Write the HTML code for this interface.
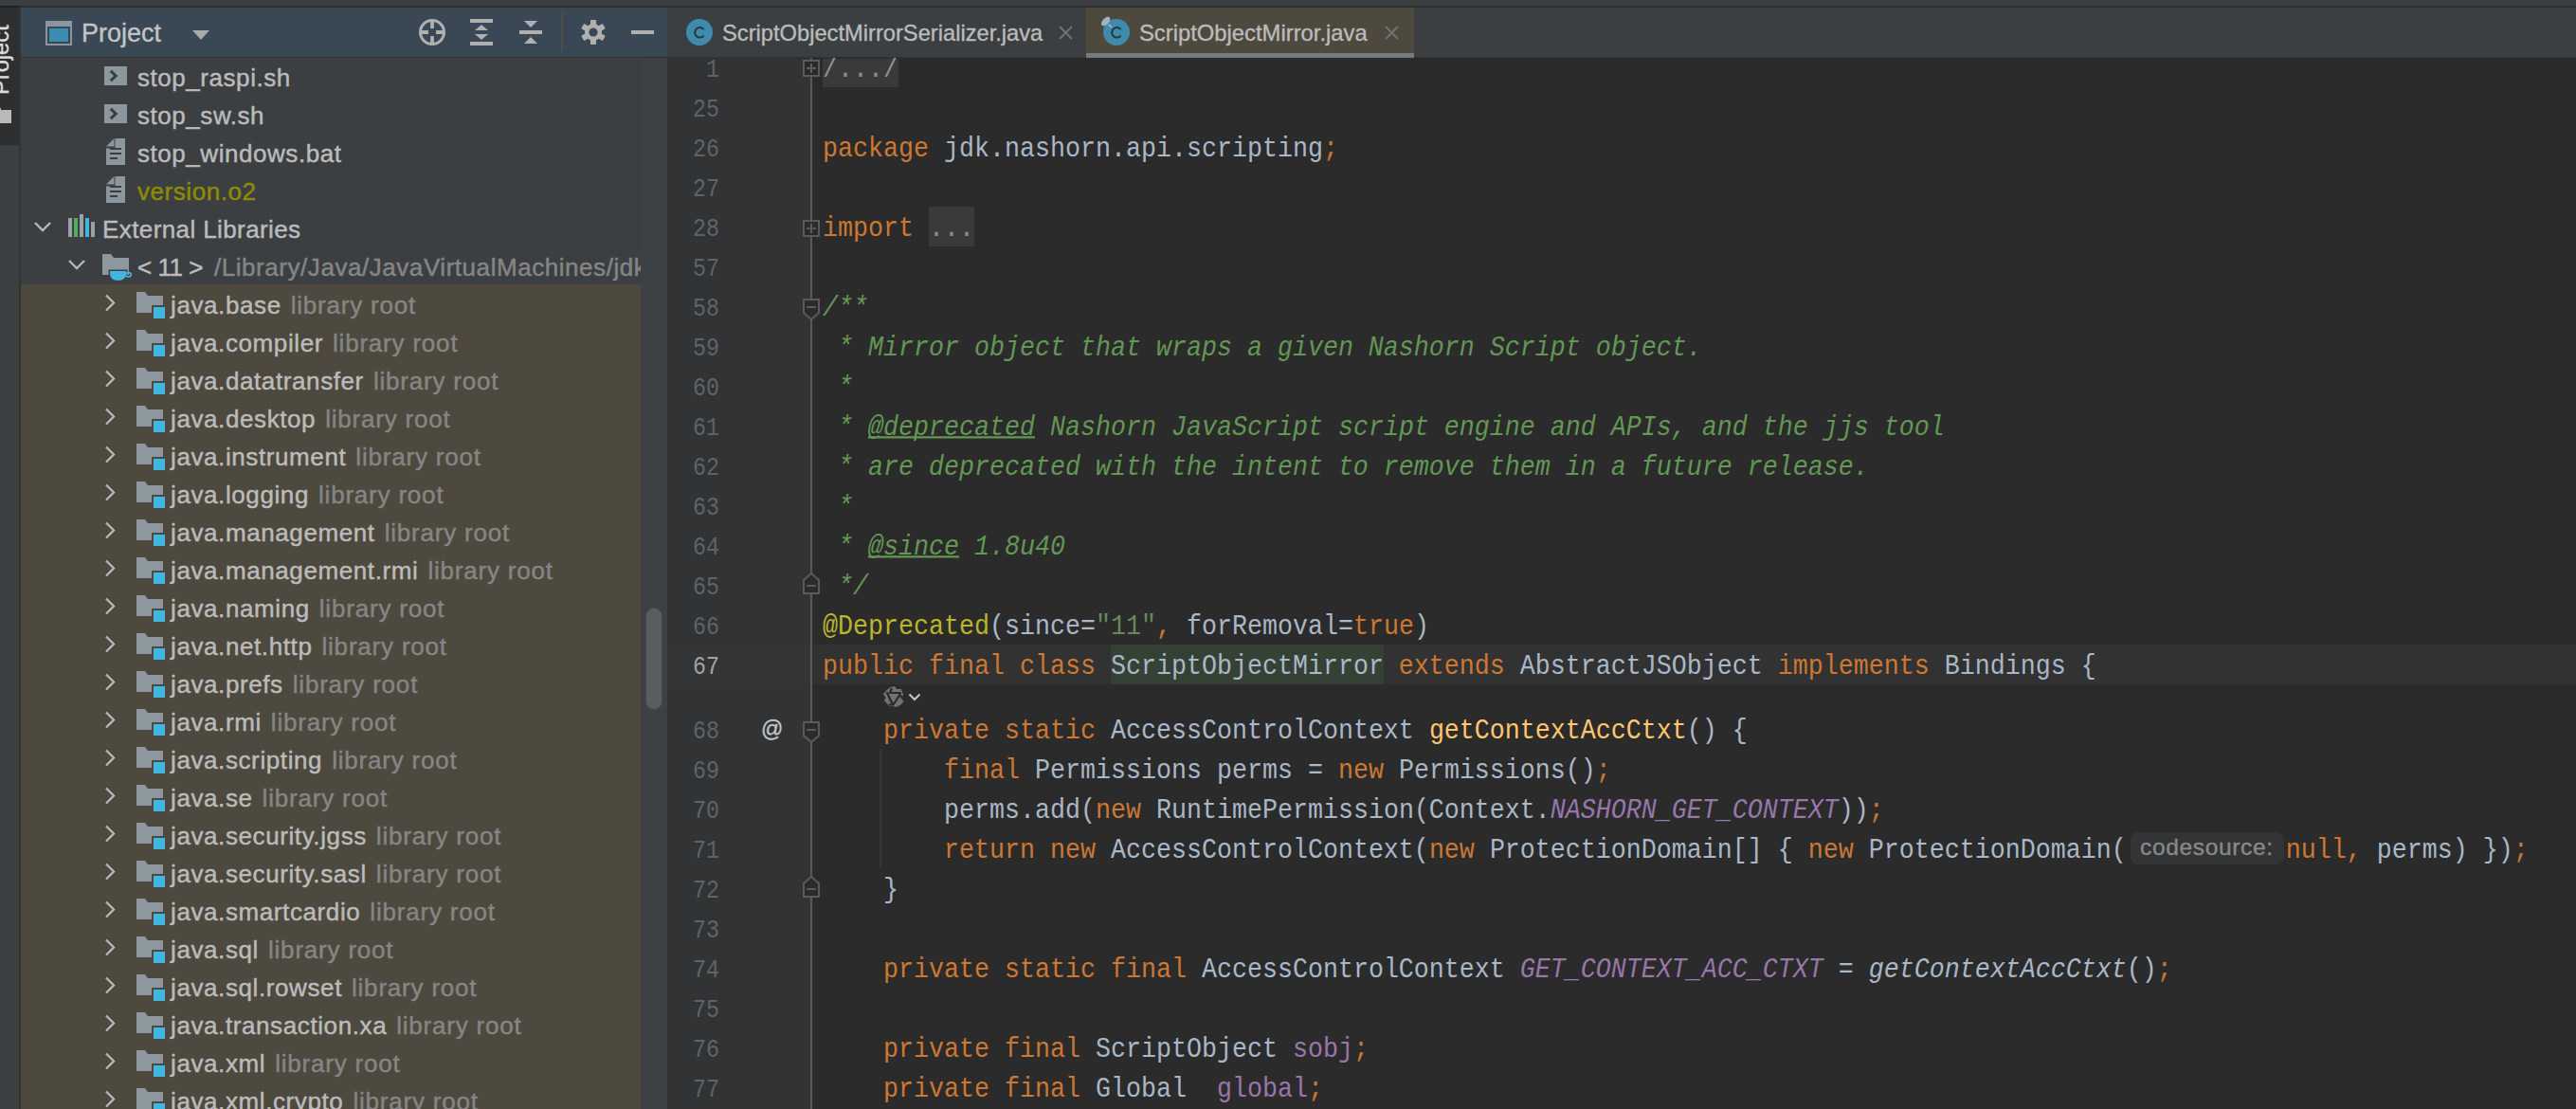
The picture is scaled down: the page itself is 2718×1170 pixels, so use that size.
<!DOCTYPE html><html><head><meta charset="utf-8"><style>
*{margin:0;padding:0;box-sizing:border-box}
html,body{width:2718px;height:1170px;overflow:hidden;background:#3c3f41}
body{position:relative;font-family:"Liberation Sans",sans-serif}
.abs{position:absolute}
.ui{font-family:"Liberation Sans",sans-serif;white-space:pre;-webkit-text-stroke:0.35px currentColor}
.row{position:absolute;left:0;height:40px;font-size:26px;line-height:40px;letter-spacing:0.55px;color:#bbbbbb;white-space:pre;-webkit-text-stroke:0.45px currentColor}
.cl{position:absolute;left:868px;height:42px;transform:scaleY(1.12);transform-origin:0 27px;font-family:"Liberation Mono",monospace;font-size:26.67px;line-height:42px;color:#a9b7c6;white-space:pre}
.ln{position:absolute;left:704px;width:55px;transform:scaleY(1.2);transform-origin:0 26px;text-align:right;height:42px;font-family:"Liberation Mono",monospace;font-size:23.3px;line-height:42px;color:#606366;white-space:pre}
.k{color:#cc7832}.c{color:#629755;font-style:italic}.an{color:#bbb529}.s{color:#6a8759}.m{color:#ffc66d}.f{color:#9876aa}.fi{color:#9876aa;font-style:italic}.i{font-style:italic}
.u{text-decoration:underline;text-underline-offset:1px;text-decoration-thickness:2px;text-decoration-skip-ink:none}
</style></head><body>
<div class="abs" style="left:0;top:0;width:2718px;height:6px;background:#3c3f41"></div>
<div class="abs" style="left:0;top:6px;width:2718px;height:2px;background:#2f2f2f"></div>
<div class="abs" style="left:0;top:6px;width:20px;height:2px;background:#222222"></div>
<div class="abs" style="left:0;top:8px;width:20px;height:1162px;background:#3c3f41"></div>
<div class="abs" style="left:0;top:8px;width:20px;height:145px;background:#2d2f30;overflow:hidden"><div class="ui" style="position:absolute;left:-13.4px;top:91.5px;transform:rotate(-90deg);transform-origin:0 0;font-size:23.7px;line-height:28px;color:#dcdcdc">Project</div><div class="abs" style="left:0;top:108px;width:12px;height:14px;background:#b9babb"></div><div class="abs" style="left:0;top:105.7px;width:1.4px;height:3px;background:#b9babb"></div></div>
<div class="abs" style="left:20px;top:8px;width:2px;height:1162px;background:#323334"></div>
<div class="abs" style="left:22px;top:8px;width:682px;height:52px;background:#3a4755"></div>
<div class="abs" style="left:22px;top:60px;width:682px;height:1px;background:#2f3134"></div>
<div class="abs" style="left:48px;top:22px;width:28px;height:26px;background:#8b97a0"></div>
<div class="abs" style="left:50px;top:28px;width:24px;height:18px;background:#3a4755"></div>
<div class="abs" style="left:52px;top:30px;width:20px;height:14px;background:#3d8db0"></div>
<div class="ui abs" style="left:86px;top:15px;font-size:27px;line-height:40px;color:#c4c4c4">Project</div>
<svg class="abs" style="left:203px;top:32px" width="18" height="10"><path d="M0 0H18L9 10Z" fill="#aaaaaa"/></svg>
<svg class="abs" style="left:440px;top:18px" width="32" height="32" viewBox="0 0 32 32"><circle cx="16" cy="16" r="12.5" fill="none" stroke="#b0b0b0" stroke-width="3"/><path d="M16 3.5V12M16 20V28.5M3.5 16H12M20 16H28.5" stroke="#b0b0b0" stroke-width="3.8"/></svg>
<svg class="abs" style="left:496px;top:20px" width="24" height="28" viewBox="0 0 24 28"><rect x="0" y="0" width="24" height="4" fill="#b0b0b0"/><rect x="0" y="24" width="24" height="4" fill="#b0b0b0"/><path d="M5 12L12 6L19 12Z M5 16L12 22L19 16Z" fill="#b0b0b0"/></svg>
<svg class="abs" style="left:548px;top:22px" width="24" height="24" viewBox="0 0 24 24"><path d="M5 0H19L12 7Z" fill="#b0b0b0"/><rect x="0" y="10" width="24" height="4" fill="#b0b0b0"/><path d="M5 24H19L12 17Z" fill="#b0b0b0"/></svg>
<div class="abs" style="left:592px;top:14px;width:2px;height:40px;background:#514d49"></div>
<svg class="abs" style="left:613px;top:21px" width="26" height="26" viewBox="0 0 26 26"><g fill="#b0b0b0"><rect x="10" y="0" width="6" height="6" rx="0.8" transform="rotate(0 13 13)"/><rect x="10" y="0" width="6" height="6" rx="0.8" transform="rotate(60 13 13)"/><rect x="10" y="0" width="6" height="6" rx="0.8" transform="rotate(120 13 13)"/><rect x="10" y="0" width="6" height="6" rx="0.8" transform="rotate(180 13 13)"/><rect x="10" y="0" width="6" height="6" rx="0.8" transform="rotate(240 13 13)"/><rect x="10" y="0" width="6" height="6" rx="0.8" transform="rotate(300 13 13)"/><circle cx="13" cy="13" r="9"/></g><circle cx="13" cy="13" r="4.6" fill="#3a4755"/></svg>
<div class="abs" style="left:666px;top:32px;width:24px;height:4px;background:#b0b0b0"></div>
<div class="abs" style="left:22px;top:61px;width:654px;height:1109px;background:#3c3f41"></div>
<div class="abs" style="left:22px;top:300px;width:654px;height:870px;background:#4d493e"></div>
<div class="abs" style="left:676px;top:61px;width:28px;height:1109px;background:#3e4144"></div>
<div class="abs" style="left:681px;top:641px;width:18px;height:108px;border-radius:9px;background:#5c5d5f;border:1px solid #474849"></div>
<div class="abs" style="left:22px;top:61px;width:654px;height:1109px;overflow:hidden">
<div class="row" style="top:-1px;left:0;width:654px"><svg style="position:absolute;left:88px;top:10px" width="24" height="20" viewBox="0 0 24 20"><rect x="0" y="0" width="24" height="20" fill="#8d979e"/><path d="M6.8 4.8L12.2 10L6.8 15.2" fill="none" stroke="#3c3f41" stroke-width="3"/></svg><span style="position:absolute;left:123px;top:1.5px;">stop_raspi.sh</span></div>
<div class="row" style="top:39px;left:0;width:654px"><svg style="position:absolute;left:88px;top:10px" width="24" height="20" viewBox="0 0 24 20"><rect x="0" y="0" width="24" height="20" fill="#8d979e"/><path d="M6.8 4.8L12.2 10L6.8 15.2" fill="none" stroke="#3c3f41" stroke-width="3"/></svg><span style="position:absolute;left:123px;top:1.5px;">stop_sw.sh</span></div>
<div class="row" style="top:79px;left:0;width:654px"><svg style="position:absolute;left:90px;top:6px" width="20" height="28" viewBox="0 0 20 28"><path d="M9.5 0H20V28H0V10.5H9.5Z" fill="#8d979e"/><path d="M0 8.5L8.5 0V8.5Z" fill="#8d979e"/><rect x="4" y="10" width="12" height="2" fill="#3c3f41"/><rect x="4" y="15" width="12" height="2" fill="#3c3f41"/><rect x="4" y="20" width="8" height="2" fill="#3c3f41"/></svg><span style="position:absolute;left:123px;top:1.5px;">stop_windows.bat</span></div>
<div class="row" style="top:119px;left:0;width:654px"><svg style="position:absolute;left:90px;top:6px" width="20" height="28" viewBox="0 0 20 28"><path d="M9.5 0H20V28H0V10.5H9.5Z" fill="#8d979e"/><path d="M0 8.5L8.5 0V8.5Z" fill="#8d979e"/><rect x="4" y="10" width="12" height="2" fill="#3c3f41"/><rect x="4" y="15" width="12" height="2" fill="#3c3f41"/><rect x="4" y="20" width="8" height="2" fill="#3c3f41"/></svg><span style="position:absolute;left:123px;top:1.5px;color:#8c8c00">version.o2</span></div>
<div class="row" style="top:159px;left:0;width:654px"><svg style="position:absolute;left:14px;top:13px" width="18" height="12" viewBox="0 0 18 12"><path d="M1 2L9 10L17 2" fill="none" stroke="#b4b6b8" stroke-width="2.4"/></svg><svg style="position:absolute;left:50px;top:6px" width="28" height="24" viewBox="0 0 28 24"><rect x="0" y="4" width="4" height="20" fill="#9aa1a6"/><rect x="6" y="4" width="4" height="20" fill="#59a869"/><rect x="12" y="0" width="4" height="24" fill="#9aa1a6"/><rect x="18" y="4" width="4" height="20" fill="#40b6e0"/><rect x="24" y="8" width="4" height="16" fill="#9aa1a6"/></svg><span style="position:absolute;left:86px;top:1.5px;letter-spacing:0.4px">External Libraries</span></div>
<div class="row" style="top:199px;left:0;width:654px"><svg style="position:absolute;left:50px;top:13px" width="18" height="12" viewBox="0 0 18 12"><path d="M1 2L9 10L17 2" fill="none" stroke="#b4b6b8" stroke-width="2.4"/></svg><svg style="position:absolute;left:86px;top:8px" width="32" height="30" viewBox="0 0 32 30"><path d="M0 0H9L12 4H28V22H0Z" fill="#8d979e"/><path d="M6.5 16.5H26.5V19.5Q26.5 29.5 16.5 29.5Q6.5 29.5 6.5 19.5Z" fill="#3c3f41"/><path d="M8 18H25V20Q25 28 16.5 28Q8 28 8 20Z" fill="#40b6e0"/><ellipse cx="27.3" cy="21.8" rx="3" ry="2.2" fill="none" stroke="#40b6e0" stroke-width="1.7"/></svg><span style="position:absolute;left:123px;top:1.5px;letter-spacing:-0.45px">&lt; 11 &gt;</span><span style="position:absolute;left:204px;top:1.5px;color:#858585">/Library/Java/JavaVirtualMachines/jdk-11.0.2.jdk/Contents/Home</span></div>
<div class="row" style="top:239px;left:0;width:654px"><svg style="position:absolute;left:88px;top:10px" width="13" height="19" viewBox="0 0 13 19"><path d="M2 1.5L10 9.5L2 17.5" fill="none" stroke="#b4b6b8" stroke-width="2.4"/></svg><svg style="position:absolute;left:122px;top:8px" width="32" height="30" viewBox="0 0 32 30"><path d="M0 0H9L12 4H28V22H0Z" fill="#8d979e"/><rect x="16" y="14" width="16" height="16" fill="#4d493e"/><rect x="18" y="16" width="12" height="12" fill="#40b6e0"/></svg><span style="position:absolute;left:158px;top:1.5px;letter-spacing:0.6px">java.base<span style="color:#858585;margin-left:10px;letter-spacing:0.8px">library root</span></span></div>
<div class="row" style="top:279px;left:0;width:654px"><svg style="position:absolute;left:88px;top:10px" width="13" height="19" viewBox="0 0 13 19"><path d="M2 1.5L10 9.5L2 17.5" fill="none" stroke="#b4b6b8" stroke-width="2.4"/></svg><svg style="position:absolute;left:122px;top:8px" width="32" height="30" viewBox="0 0 32 30"><path d="M0 0H9L12 4H28V22H0Z" fill="#8d979e"/><rect x="16" y="14" width="16" height="16" fill="#4d493e"/><rect x="18" y="16" width="12" height="12" fill="#40b6e0"/></svg><span style="position:absolute;left:158px;top:1.5px;letter-spacing:0.6px">java.compiler<span style="color:#858585;margin-left:10px;letter-spacing:0.8px">library root</span></span></div>
<div class="row" style="top:319px;left:0;width:654px"><svg style="position:absolute;left:88px;top:10px" width="13" height="19" viewBox="0 0 13 19"><path d="M2 1.5L10 9.5L2 17.5" fill="none" stroke="#b4b6b8" stroke-width="2.4"/></svg><svg style="position:absolute;left:122px;top:8px" width="32" height="30" viewBox="0 0 32 30"><path d="M0 0H9L12 4H28V22H0Z" fill="#8d979e"/><rect x="16" y="14" width="16" height="16" fill="#4d493e"/><rect x="18" y="16" width="12" height="12" fill="#40b6e0"/></svg><span style="position:absolute;left:158px;top:1.5px;letter-spacing:0.6px">java.datatransfer<span style="color:#858585;margin-left:10px;letter-spacing:0.8px">library root</span></span></div>
<div class="row" style="top:359px;left:0;width:654px"><svg style="position:absolute;left:88px;top:10px" width="13" height="19" viewBox="0 0 13 19"><path d="M2 1.5L10 9.5L2 17.5" fill="none" stroke="#b4b6b8" stroke-width="2.4"/></svg><svg style="position:absolute;left:122px;top:8px" width="32" height="30" viewBox="0 0 32 30"><path d="M0 0H9L12 4H28V22H0Z" fill="#8d979e"/><rect x="16" y="14" width="16" height="16" fill="#4d493e"/><rect x="18" y="16" width="12" height="12" fill="#40b6e0"/></svg><span style="position:absolute;left:158px;top:1.5px;letter-spacing:0.6px">java.desktop<span style="color:#858585;margin-left:10px;letter-spacing:0.8px">library root</span></span></div>
<div class="row" style="top:399px;left:0;width:654px"><svg style="position:absolute;left:88px;top:10px" width="13" height="19" viewBox="0 0 13 19"><path d="M2 1.5L10 9.5L2 17.5" fill="none" stroke="#b4b6b8" stroke-width="2.4"/></svg><svg style="position:absolute;left:122px;top:8px" width="32" height="30" viewBox="0 0 32 30"><path d="M0 0H9L12 4H28V22H0Z" fill="#8d979e"/><rect x="16" y="14" width="16" height="16" fill="#4d493e"/><rect x="18" y="16" width="12" height="12" fill="#40b6e0"/></svg><span style="position:absolute;left:158px;top:1.5px;letter-spacing:0.6px">java.instrument<span style="color:#858585;margin-left:10px;letter-spacing:0.8px">library root</span></span></div>
<div class="row" style="top:439px;left:0;width:654px"><svg style="position:absolute;left:88px;top:10px" width="13" height="19" viewBox="0 0 13 19"><path d="M2 1.5L10 9.5L2 17.5" fill="none" stroke="#b4b6b8" stroke-width="2.4"/></svg><svg style="position:absolute;left:122px;top:8px" width="32" height="30" viewBox="0 0 32 30"><path d="M0 0H9L12 4H28V22H0Z" fill="#8d979e"/><rect x="16" y="14" width="16" height="16" fill="#4d493e"/><rect x="18" y="16" width="12" height="12" fill="#40b6e0"/></svg><span style="position:absolute;left:158px;top:1.5px;letter-spacing:0.6px">java.logging<span style="color:#858585;margin-left:10px;letter-spacing:0.8px">library root</span></span></div>
<div class="row" style="top:479px;left:0;width:654px"><svg style="position:absolute;left:88px;top:10px" width="13" height="19" viewBox="0 0 13 19"><path d="M2 1.5L10 9.5L2 17.5" fill="none" stroke="#b4b6b8" stroke-width="2.4"/></svg><svg style="position:absolute;left:122px;top:8px" width="32" height="30" viewBox="0 0 32 30"><path d="M0 0H9L12 4H28V22H0Z" fill="#8d979e"/><rect x="16" y="14" width="16" height="16" fill="#4d493e"/><rect x="18" y="16" width="12" height="12" fill="#40b6e0"/></svg><span style="position:absolute;left:158px;top:1.5px;letter-spacing:0.6px">java.management<span style="color:#858585;margin-left:10px;letter-spacing:0.8px">library root</span></span></div>
<div class="row" style="top:519px;left:0;width:654px"><svg style="position:absolute;left:88px;top:10px" width="13" height="19" viewBox="0 0 13 19"><path d="M2 1.5L10 9.5L2 17.5" fill="none" stroke="#b4b6b8" stroke-width="2.4"/></svg><svg style="position:absolute;left:122px;top:8px" width="32" height="30" viewBox="0 0 32 30"><path d="M0 0H9L12 4H28V22H0Z" fill="#8d979e"/><rect x="16" y="14" width="16" height="16" fill="#4d493e"/><rect x="18" y="16" width="12" height="12" fill="#40b6e0"/></svg><span style="position:absolute;left:158px;top:1.5px;letter-spacing:0.6px">java.management.rmi<span style="color:#858585;margin-left:10px;letter-spacing:0.8px">library root</span></span></div>
<div class="row" style="top:559px;left:0;width:654px"><svg style="position:absolute;left:88px;top:10px" width="13" height="19" viewBox="0 0 13 19"><path d="M2 1.5L10 9.5L2 17.5" fill="none" stroke="#b4b6b8" stroke-width="2.4"/></svg><svg style="position:absolute;left:122px;top:8px" width="32" height="30" viewBox="0 0 32 30"><path d="M0 0H9L12 4H28V22H0Z" fill="#8d979e"/><rect x="16" y="14" width="16" height="16" fill="#4d493e"/><rect x="18" y="16" width="12" height="12" fill="#40b6e0"/></svg><span style="position:absolute;left:158px;top:1.5px;letter-spacing:0.6px">java.naming<span style="color:#858585;margin-left:10px;letter-spacing:0.8px">library root</span></span></div>
<div class="row" style="top:599px;left:0;width:654px"><svg style="position:absolute;left:88px;top:10px" width="13" height="19" viewBox="0 0 13 19"><path d="M2 1.5L10 9.5L2 17.5" fill="none" stroke="#b4b6b8" stroke-width="2.4"/></svg><svg style="position:absolute;left:122px;top:8px" width="32" height="30" viewBox="0 0 32 30"><path d="M0 0H9L12 4H28V22H0Z" fill="#8d979e"/><rect x="16" y="14" width="16" height="16" fill="#4d493e"/><rect x="18" y="16" width="12" height="12" fill="#40b6e0"/></svg><span style="position:absolute;left:158px;top:1.5px;letter-spacing:0.6px">java.net.http<span style="color:#858585;margin-left:10px;letter-spacing:0.8px">library root</span></span></div>
<div class="row" style="top:639px;left:0;width:654px"><svg style="position:absolute;left:88px;top:10px" width="13" height="19" viewBox="0 0 13 19"><path d="M2 1.5L10 9.5L2 17.5" fill="none" stroke="#b4b6b8" stroke-width="2.4"/></svg><svg style="position:absolute;left:122px;top:8px" width="32" height="30" viewBox="0 0 32 30"><path d="M0 0H9L12 4H28V22H0Z" fill="#8d979e"/><rect x="16" y="14" width="16" height="16" fill="#4d493e"/><rect x="18" y="16" width="12" height="12" fill="#40b6e0"/></svg><span style="position:absolute;left:158px;top:1.5px;letter-spacing:0.6px">java.prefs<span style="color:#858585;margin-left:10px;letter-spacing:0.8px">library root</span></span></div>
<div class="row" style="top:679px;left:0;width:654px"><svg style="position:absolute;left:88px;top:10px" width="13" height="19" viewBox="0 0 13 19"><path d="M2 1.5L10 9.5L2 17.5" fill="none" stroke="#b4b6b8" stroke-width="2.4"/></svg><svg style="position:absolute;left:122px;top:8px" width="32" height="30" viewBox="0 0 32 30"><path d="M0 0H9L12 4H28V22H0Z" fill="#8d979e"/><rect x="16" y="14" width="16" height="16" fill="#4d493e"/><rect x="18" y="16" width="12" height="12" fill="#40b6e0"/></svg><span style="position:absolute;left:158px;top:1.5px;letter-spacing:0.6px">java.rmi<span style="color:#858585;margin-left:10px;letter-spacing:0.8px">library root</span></span></div>
<div class="row" style="top:719px;left:0;width:654px"><svg style="position:absolute;left:88px;top:10px" width="13" height="19" viewBox="0 0 13 19"><path d="M2 1.5L10 9.5L2 17.5" fill="none" stroke="#b4b6b8" stroke-width="2.4"/></svg><svg style="position:absolute;left:122px;top:8px" width="32" height="30" viewBox="0 0 32 30"><path d="M0 0H9L12 4H28V22H0Z" fill="#8d979e"/><rect x="16" y="14" width="16" height="16" fill="#4d493e"/><rect x="18" y="16" width="12" height="12" fill="#40b6e0"/></svg><span style="position:absolute;left:158px;top:1.5px;letter-spacing:0.6px">java.scripting<span style="color:#858585;margin-left:10px;letter-spacing:0.8px">library root</span></span></div>
<div class="row" style="top:759px;left:0;width:654px"><svg style="position:absolute;left:88px;top:10px" width="13" height="19" viewBox="0 0 13 19"><path d="M2 1.5L10 9.5L2 17.5" fill="none" stroke="#b4b6b8" stroke-width="2.4"/></svg><svg style="position:absolute;left:122px;top:8px" width="32" height="30" viewBox="0 0 32 30"><path d="M0 0H9L12 4H28V22H0Z" fill="#8d979e"/><rect x="16" y="14" width="16" height="16" fill="#4d493e"/><rect x="18" y="16" width="12" height="12" fill="#40b6e0"/></svg><span style="position:absolute;left:158px;top:1.5px;letter-spacing:0.6px">java.se<span style="color:#858585;margin-left:10px;letter-spacing:0.8px">library root</span></span></div>
<div class="row" style="top:799px;left:0;width:654px"><svg style="position:absolute;left:88px;top:10px" width="13" height="19" viewBox="0 0 13 19"><path d="M2 1.5L10 9.5L2 17.5" fill="none" stroke="#b4b6b8" stroke-width="2.4"/></svg><svg style="position:absolute;left:122px;top:8px" width="32" height="30" viewBox="0 0 32 30"><path d="M0 0H9L12 4H28V22H0Z" fill="#8d979e"/><rect x="16" y="14" width="16" height="16" fill="#4d493e"/><rect x="18" y="16" width="12" height="12" fill="#40b6e0"/></svg><span style="position:absolute;left:158px;top:1.5px;letter-spacing:0.6px">java.security.jgss<span style="color:#858585;margin-left:10px;letter-spacing:0.8px">library root</span></span></div>
<div class="row" style="top:839px;left:0;width:654px"><svg style="position:absolute;left:88px;top:10px" width="13" height="19" viewBox="0 0 13 19"><path d="M2 1.5L10 9.5L2 17.5" fill="none" stroke="#b4b6b8" stroke-width="2.4"/></svg><svg style="position:absolute;left:122px;top:8px" width="32" height="30" viewBox="0 0 32 30"><path d="M0 0H9L12 4H28V22H0Z" fill="#8d979e"/><rect x="16" y="14" width="16" height="16" fill="#4d493e"/><rect x="18" y="16" width="12" height="12" fill="#40b6e0"/></svg><span style="position:absolute;left:158px;top:1.5px;letter-spacing:0.6px">java.security.sasl<span style="color:#858585;margin-left:10px;letter-spacing:0.8px">library root</span></span></div>
<div class="row" style="top:879px;left:0;width:654px"><svg style="position:absolute;left:88px;top:10px" width="13" height="19" viewBox="0 0 13 19"><path d="M2 1.5L10 9.5L2 17.5" fill="none" stroke="#b4b6b8" stroke-width="2.4"/></svg><svg style="position:absolute;left:122px;top:8px" width="32" height="30" viewBox="0 0 32 30"><path d="M0 0H9L12 4H28V22H0Z" fill="#8d979e"/><rect x="16" y="14" width="16" height="16" fill="#4d493e"/><rect x="18" y="16" width="12" height="12" fill="#40b6e0"/></svg><span style="position:absolute;left:158px;top:1.5px;letter-spacing:0.6px">java.smartcardio<span style="color:#858585;margin-left:10px;letter-spacing:0.8px">library root</span></span></div>
<div class="row" style="top:919px;left:0;width:654px"><svg style="position:absolute;left:88px;top:10px" width="13" height="19" viewBox="0 0 13 19"><path d="M2 1.5L10 9.5L2 17.5" fill="none" stroke="#b4b6b8" stroke-width="2.4"/></svg><svg style="position:absolute;left:122px;top:8px" width="32" height="30" viewBox="0 0 32 30"><path d="M0 0H9L12 4H28V22H0Z" fill="#8d979e"/><rect x="16" y="14" width="16" height="16" fill="#4d493e"/><rect x="18" y="16" width="12" height="12" fill="#40b6e0"/></svg><span style="position:absolute;left:158px;top:1.5px;letter-spacing:0.6px">java.sql<span style="color:#858585;margin-left:10px;letter-spacing:0.8px">library root</span></span></div>
<div class="row" style="top:959px;left:0;width:654px"><svg style="position:absolute;left:88px;top:10px" width="13" height="19" viewBox="0 0 13 19"><path d="M2 1.5L10 9.5L2 17.5" fill="none" stroke="#b4b6b8" stroke-width="2.4"/></svg><svg style="position:absolute;left:122px;top:8px" width="32" height="30" viewBox="0 0 32 30"><path d="M0 0H9L12 4H28V22H0Z" fill="#8d979e"/><rect x="16" y="14" width="16" height="16" fill="#4d493e"/><rect x="18" y="16" width="12" height="12" fill="#40b6e0"/></svg><span style="position:absolute;left:158px;top:1.5px;letter-spacing:0.6px">java.sql.rowset<span style="color:#858585;margin-left:10px;letter-spacing:0.8px">library root</span></span></div>
<div class="row" style="top:999px;left:0;width:654px"><svg style="position:absolute;left:88px;top:10px" width="13" height="19" viewBox="0 0 13 19"><path d="M2 1.5L10 9.5L2 17.5" fill="none" stroke="#b4b6b8" stroke-width="2.4"/></svg><svg style="position:absolute;left:122px;top:8px" width="32" height="30" viewBox="0 0 32 30"><path d="M0 0H9L12 4H28V22H0Z" fill="#8d979e"/><rect x="16" y="14" width="16" height="16" fill="#4d493e"/><rect x="18" y="16" width="12" height="12" fill="#40b6e0"/></svg><span style="position:absolute;left:158px;top:1.5px;letter-spacing:0.6px">java.transaction.xa<span style="color:#858585;margin-left:10px;letter-spacing:0.8px">library root</span></span></div>
<div class="row" style="top:1039px;left:0;width:654px"><svg style="position:absolute;left:88px;top:10px" width="13" height="19" viewBox="0 0 13 19"><path d="M2 1.5L10 9.5L2 17.5" fill="none" stroke="#b4b6b8" stroke-width="2.4"/></svg><svg style="position:absolute;left:122px;top:8px" width="32" height="30" viewBox="0 0 32 30"><path d="M0 0H9L12 4H28V22H0Z" fill="#8d979e"/><rect x="16" y="14" width="16" height="16" fill="#4d493e"/><rect x="18" y="16" width="12" height="12" fill="#40b6e0"/></svg><span style="position:absolute;left:158px;top:1.5px;letter-spacing:0.6px">java.xml<span style="color:#858585;margin-left:10px;letter-spacing:0.8px">library root</span></span></div>
<div class="row" style="top:1079px;left:0;width:654px"><svg style="position:absolute;left:88px;top:10px" width="13" height="19" viewBox="0 0 13 19"><path d="M2 1.5L10 9.5L2 17.5" fill="none" stroke="#b4b6b8" stroke-width="2.4"/></svg><svg style="position:absolute;left:122px;top:8px" width="32" height="30" viewBox="0 0 32 30"><path d="M0 0H9L12 4H28V22H0Z" fill="#8d979e"/><rect x="16" y="14" width="16" height="16" fill="#4d493e"/><rect x="18" y="16" width="12" height="12" fill="#40b6e0"/></svg><span style="position:absolute;left:158px;top:1.5px;letter-spacing:0.6px">java.xml.crypto<span style="color:#858585;margin-left:10px;letter-spacing:0.8px">library root</span></span></div>
</div>
<div class="abs" style="left:704px;top:8px;width:2014px;height:52px;background:#3c3f41"></div>
<div class="abs" style="left:704px;top:60px;width:2014px;height:1px;background:#323232"></div>
<svg class="abs" style="left:724px;top:20px" width="28" height="28" viewBox="0 0 28 28"><circle cx="14" cy="14" r="14" fill="#408bab"/><path d="M18.6 11A5.3 5.3 0 1 0 18.6 17.6" fill="none" stroke="#263842" stroke-width="2"/></svg>
<div class="ui abs" style="left:762px;top:16px;font-size:23.7px;line-height:38px;color:#bbbbbb">ScriptObjectMirrorSerializer.java</div>
<svg class="abs" style="left:1117px;top:27px" width="15" height="15" viewBox="0 0 15 15"><path d="M1 1L14 14M14 1L1 14" stroke="#6f7376" stroke-width="1.8"/></svg>
<div class="abs" style="left:1146px;top:8px;width:346px;height:52px;background:#4d493e"></div>
<div class="abs" style="left:1146px;top:56px;width:346px;height:5px;background:#747a80"></div>
<svg class="abs" style="left:1164px;top:20px" width="28" height="28" viewBox="0 0 28 28"><circle cx="14" cy="14" r="14" fill="#408bab"/><path d="M18.6 11A5.3 5.3 0 1 0 18.6 17.6" fill="none" stroke="#263842" stroke-width="2"/></svg>
<svg class="abs" style="left:1158px;top:14px" width="18" height="18" viewBox="0 0 18 18"><ellipse cx="8.7" cy="8.6" rx="5.8" ry="3.3" transform="rotate(-45 8.7 8.6)" fill="#a3b2bc"/><path d="M11 13.1L13.4 11.2L15.8 15.7Z" fill="#a3b2bc"/></svg>
<div class="ui abs" style="left:1202px;top:16px;font-size:23.8px;line-height:38px;color:#bbbbbb">ScriptObjectMirror.java</div>
<svg class="abs" style="left:1461px;top:27px" width="15" height="15" viewBox="0 0 15 15"><path d="M1 1L14 14M14 1L1 14" stroke="#6f7376" stroke-width="1.8"/></svg>
<div class="abs" style="left:704px;top:61px;width:153px;height:1109px;background:#313335"></div>
<div class="abs" style="left:857px;top:61px;width:1861px;height:1109px;background:#2b2b2b"></div>
<div class="abs" style="left:704px;top:61px;width:2014px;height:1109px;overflow:hidden">
<div class="abs" style="left:0;top:619px;width:151px;height:42px;background:#343537"></div>
<div class="abs" style="left:153px;top:619px;width:1861px;height:42px;background:#323232"></div>
<div class="ln" style="left:0;top:-7px;color:#606366">1</div>
<div class="ln" style="left:0;top:35px;color:#606366">25</div>
<div class="ln" style="left:0;top:77px;color:#606366">26</div>
<div class="ln" style="left:0;top:119px;color:#606366">27</div>
<div class="ln" style="left:0;top:161px;color:#606366">28</div>
<div class="ln" style="left:0;top:203px;color:#606366">57</div>
<div class="ln" style="left:0;top:245px;color:#606366">58</div>
<div class="ln" style="left:0;top:287px;color:#606366">59</div>
<div class="ln" style="left:0;top:329px;color:#606366">60</div>
<div class="ln" style="left:0;top:371px;color:#606366">61</div>
<div class="ln" style="left:0;top:413px;color:#606366">62</div>
<div class="ln" style="left:0;top:455px;color:#606366">63</div>
<div class="ln" style="left:0;top:497px;color:#606366">64</div>
<div class="ln" style="left:0;top:539px;color:#606366">65</div>
<div class="ln" style="left:0;top:581px;color:#606366">66</div>
<div class="ln" style="left:0;top:623px;color:#a4a3a3">67</div>
<div class="ln" style="left:0;top:691px;color:#606366">68</div>
<div class="ln" style="left:0;top:733px;color:#606366">69</div>
<div class="ln" style="left:0;top:775px;color:#606366">70</div>
<div class="ln" style="left:0;top:817px;color:#606366">71</div>
<div class="ln" style="left:0;top:859px;color:#606366">72</div>
<div class="ln" style="left:0;top:901px;color:#606366">73</div>
<div class="ln" style="left:0;top:943px;color:#606366">74</div>
<div class="ln" style="left:0;top:985px;color:#606366">75</div>
<div class="ln" style="left:0;top:1027px;color:#606366">76</div>
<div class="ln" style="left:0;top:1069px;color:#606366">77</div>
<div class="abs" style="left:164px;top:1px;width:80px;height:30px;background:#3a3a3a"></div>
<div class="abs" style="left:276px;top:157px;width:48px;height:42px;background:#3a3a3a"></div>
<div class="cl" style="left:164px;top:-8px"><span style="color:#8e8e8e">/.../</span></div>
<div class="cl" style="left:164px;top:76px"><span class="k">package</span> jdk.nashorn.api.scripting<span class="k">;</span></div>
<div class="cl" style="left:164px;top:160px"><span class="k">import</span> <span style="color:#8e8e8e">...</span></div>
<div class="cl" style="left:164px;top:244px"><span class="c">/**</span></div>
<div class="cl" style="left:164px;top:286px"><span class="c"> * Mirror object that wraps a given Nashorn Script object.</span></div>
<div class="cl" style="left:164px;top:328px"><span class="c"> *</span></div>
<div class="cl" style="left:164px;top:370px"><span class="c"> * </span><span class="c u">@deprecated</span><span class="c"> Nashorn JavaScript script engine and APIs, and the jjs tool</span></div>
<div class="cl" style="left:164px;top:412px"><span class="c"> * are deprecated with the intent to remove them in a future release.</span></div>
<div class="cl" style="left:164px;top:454px"><span class="c"> *</span></div>
<div class="cl" style="left:164px;top:496px"><span class="c"> * </span><span class="c u">@since</span><span class="c"> 1.8u40</span></div>
<div class="cl" style="left:164px;top:538px"><span class="c"> */</span></div>
<div class="cl" style="left:164px;top:580px"><span class="an">@Deprecated</span>(since=<span class="s">&quot;11&quot;</span><span class="k">,</span> forRemoval=<span class="k">true</span>)</div>
<div class="abs" style="left:468px;top:619px;width:288px;height:42px;background:#344134"></div>
<div class="cl" style="left:164px;top:622px"><span class="k">public final class </span>ScriptObjectMirror<span class="k"> extends </span>AbstractJSObject<span class="k"> implements </span>Bindings {</div>
<div class="cl" style="left:164px;top:690px"><span class="k">    private static </span>AccessControlContext <span class="m">getContextAccCtxt</span>() {</div>
<div class="cl" style="left:164px;top:732px"><span class="k">        final </span>Permissions perms = <span class="k">new </span>Permissions()<span class="k">;</span></div>
<div class="cl" style="left:164px;top:774px">        perms.add(<span class="k">new </span>RuntimePermission(Context.<span class="fi">NASHORN_GET_CONTEXT</span>))<span class="k">;</span></div>
<div class="cl" style="left:164px;top:816px"><span class="k">        return new </span>AccessControlContext(<span class="k">new </span>ProtectionDomain[] { <span class="k">new </span>ProtectionDomain(<span style="display:inline-block;width:168px"></span><span class="k">null, </span>perms) })<span class="k">;</span></div>
<div class="cl" style="left:164px;top:858px">    }</div>
<div class="cl" style="left:164px;top:942px"><span class="k">    private static final </span>AccessControlContext <span class="fi">GET_CONTEXT_ACC_CTXT</span> = <span class="i">getContextAccCtxt</span>()<span class="k">;</span></div>
<div class="cl" style="left:164px;top:1026px"><span class="k">    private final </span>ScriptObject <span class="f">sobj</span><span class="k">;</span></div>
<div class="cl" style="left:164px;top:1068px"><span class="k">    private final </span>Global  <span class="f">global</span><span class="k">;</span></div>
<svg class="abs" style="left:-704px;top:-61px" width="1000" height="1170" viewBox="0 0 1000 1170"><rect x="855" y="61" width="2" height="1109" fill="#5a5a5a"/><path d="M848 64H864V80H848Z" fill="#2b2b2b" stroke="#5a5a5a" stroke-width="2"/><path d="M851 72H861M856 67V77" stroke="#5a5a5a" stroke-width="2"/><path d="M848 233H864V249H848Z" fill="#2b2b2b" stroke="#5a5a5a" stroke-width="2"/><path d="M851 241H861M856 236V246" stroke="#5a5a5a" stroke-width="2"/><path d="M848 316H864V330L856 337L848 330Z" fill="#2b2b2b" stroke="#5a5a5a" stroke-width="2" stroke-linejoin="miter"/><path d="M851 324H861" stroke="#5a5a5a" stroke-width="2"/><path d="M848 626H864V612L856 605L848 612Z" fill="#2b2b2b" stroke="#5a5a5a" stroke-width="2" stroke-linejoin="miter"/><path d="M851 618H861" stroke="#5a5a5a" stroke-width="2"/><path d="M848 762H864V776L856 783L848 776Z" fill="#2b2b2b" stroke="#5a5a5a" stroke-width="2" stroke-linejoin="miter"/><path d="M851 770H861" stroke="#5a5a5a" stroke-width="2"/><path d="M848 946H864V932L856 925L848 932Z" fill="#2b2b2b" stroke="#5a5a5a" stroke-width="2" stroke-linejoin="miter"/><path d="M851 938H861" stroke="#5a5a5a" stroke-width="2"/><rect x="928.5" y="790" width="1.6" height="126" fill="#3a3a3a"/><path d="M939.5 725L944 724L946 727L951 727L953 733L951.5 737L953.5 740L950 744L945 746L942 745L938 745L933 739L934.5 736L932 732L935 728.5Z" fill="#727272"/><path d="M941 726L939 731H951M935.5 730L942 743.5L937.5 743.5M942.5 743.5L949.5 733L952 736.5" fill="none" stroke="#2b2b2b" stroke-width="2.2"/><path d="M959.5 732.5L965 738L970.5 732.5" fill="none" stroke="#c8c8c8" stroke-width="2"/></svg>
<div class="ui abs" style="left:99px;top:687px;font-size:23px;line-height:42px;color:#c4c4c4">@</div>
<div class="abs" style="left:1544px;top:817px;width:162px;height:34px;border-radius:8px;background:#333435"></div>
<div class="ui abs" style="left:1554px;top:816px;font-size:24.5px;letter-spacing:0.65px;line-height:33px;color:#8a8a8a">codesource:</div>
</div>
</body></html>
